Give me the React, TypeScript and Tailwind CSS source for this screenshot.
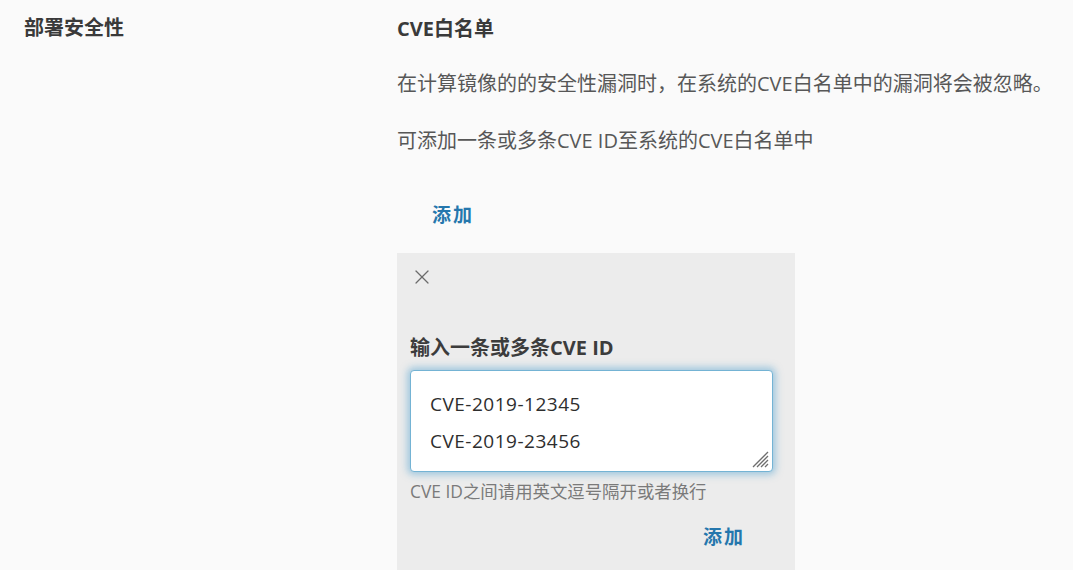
import { X } from "lucide-react";

function ResizeGrip() {
  return (
    <svg width="18" height="18" viewBox="0 0 18 18" className="text-[#6e6e6e]">
      <path
        d="M17 2 L2 17 M17 6 L6 17 M17 10 L10 17 M17 14 L14 17"
        stroke="currentColor"
        strokeWidth="1.3"
        fill="none"
      />
    </svg>
  );
}

function AddPanel() {
  return (
    <div className="w-[398px] h-[340px] bg-[#ececec] pt-[12px] px-[13px]">
      {/* close */}
      <button className="block text-[#6b6b6b]">
        <X size={24} strokeWidth={1.2} />
      </button>

      <h3 className="mt-[47px] text-[20px] leading-[24px] font-bold text-[#3c3c3c]">
        输入一条或多条CVE ID
      </h3>

      {/* input */}
      <div className="relative mt-[10px] w-[363px]">
        <textarea
          className="block w-[363px] h-[102px] resize-none rounded-[4px] bg-white border border-[#74b3d4] shadow-[0_0_7px_3px_rgba(90,165,210,0.5)] pl-[19px] pt-[15px] text-[19px] tracking-[0.5px] leading-[37px] text-[#2e2e2e] outline-none"
          defaultValue={"CVE-2019-12345\nCVE-2019-23456"}
        />
        <div className="absolute right-[4px] bottom-[4px]">
          <ResizeGrip />
        </div>
      </div>

      <p className="mt-[8px] text-[17.4px] leading-[22px] text-[#7a7a7a]">
        CVE ID之间请用英文逗号隔开或者换行
      </p>

      <div className="flex justify-end pr-[37px] mt-[23px]">
        <button className="text-[19px] leading-[24px] font-semibold tracking-[2px] text-[#2577ad]">
          添加
        </button>
      </div>
    </div>
  );
}

export default function App() {
  return (
    <div className="w-full h-[570px] overflow-hidden bg-[#fafafa] flex pl-[24px] font-['Open_Sans','Noto_Sans_CJK_SC',sans-serif]">
      <div className="w-[373px] pt-[16px]">
        <h2 className="text-[20px] leading-[24px] font-bold text-[#3a3a3a]">部署安全性</h2>
      </div>

      <div className="pt-[17px]">
        <h2 className="text-[20px] leading-[24px] font-bold text-[#3a3a3a]">CVE白名单</h2>
        <p className="mt-[31px] text-[20px] leading-[24px] text-[#575757]">
          在计算镜像的的安全性漏洞时，在系统的CVE白名单中的漏洞将会被忽略。
        </p>
        <p className="mt-[33px] text-[20px] leading-[24px] text-[#575757]">
          可添加一条或多条CVE ID至系统的CVE白名单中
        </p>

        <button className="mt-[50px] ml-[35px] text-[19px] leading-[24px] font-semibold tracking-[2px] text-[#2577ad]">
          添加
        </button>

        <div className="mt-[25px]">
          <AddPanel />
        </div>
      </div>
    </div>
  );
}
